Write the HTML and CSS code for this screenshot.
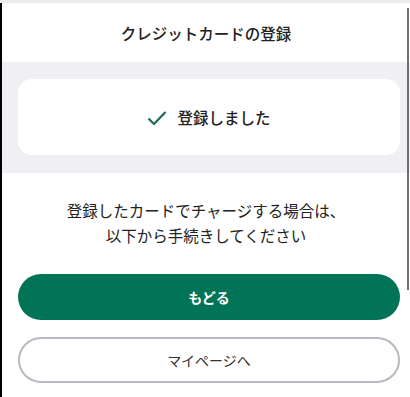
FILE: index.html
```html
<!DOCTYPE html>
<html lang="ja">

<head>
  <meta charset="utf-8">
  <title>クレジットカードの登録</title>
  <link rel="stylesheet" href="styles.css">
</head>

<body>
  <div class="topbar"></div>
  <div class="page">
    <div class="header">クレジットカードの登録</div>
    <div class="status">
      <div class="card">
        <svg class="check" width="20" height="16" viewBox="0 0 20 16">
          <path d="M1.5 8.5 L7 14 L18.5 2" fill="none" stroke="#1e6b50" stroke-width="2.2" />
        </svg>
        <span>登録しました</span>
      </div>
    </div>
    <p class="message">登録したカードでチャージする場合は、<br>以下から手続きしてください</p>
    <div class="buttons">
      <button class="btn primary">もどる</button>
      <button class="btn outline">マイページへ</button>
    </div>
    <div class="scroll"></div>
  </div>
</body>

</html>
```

FILE: styles.css
```css
body {
  margin: 0;
  background-color: #fff;
  font-family: "Noto Sans CJK JP", "Noto Sans", sans-serif;
  color: #222;
}
.topbar {
  height: 3px;
  background-color: #ebebef;
}
.page {
  position: relative;
  border-left: 2px solid #000;
  height: 394px;
}
.header {
  height: 59px;
  display: flex;
  align-items: center;
  justify-content: center;
  font-size: 15.5px;
  font-weight: 500;
}
.status {
  background-color: #efeff4;
  padding: 17px 10px 18px 16px;
}
.card {
  background-color: #fff;
  border-radius: 14px;
  height: 76px;
  display: flex;
  align-items: center;
  justify-content: center;
  gap: 10px;
  font-size: 15.5px;
  font-weight: 500;
}
.check {
  margin-top: 1px;
}
.message {
  margin: 25px 0 0;
  text-align: center;
  font-size: 15.5px;
  line-height: 25px;
}
.buttons {
  margin-top: 26px;
  padding: 0 10px 0 16px;
  display: flex;
  flex-direction: column;
  gap: 17px;
}
.btn {
  height: 46px;
  border-radius: 23px;
  font-family: inherit;
  font-size: 14px;
}
.primary {
  background-color: #017457;
  color: #fff;
  border: none;
  font-weight: 700;
}
.outline {
  background-color: #fff;
  color: #333;
  border: 2px solid #b9b9c2;
}
.scroll {
  position: absolute;
  top: 5px;
  right: 1px;
  width: 2px;
  height: 282px;
  background-color: #707070;
}
```
